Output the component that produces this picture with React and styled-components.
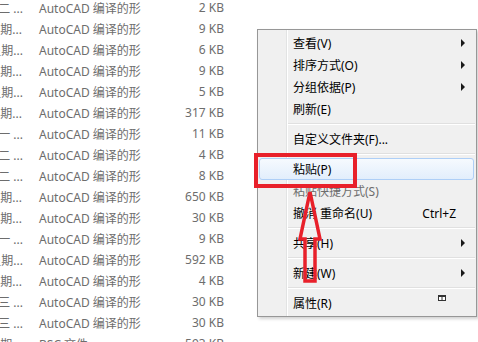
import React from "react";
import styled, { createGlobalStyle } from "styled-components";

const GlobalStyle = createGlobalStyle`
  html, body {
    margin: 0;
    padding: 0;
    background: #ffffff;
    overflow: hidden;
  }
  body {
    font-family: "Noto Sans", "Noto Sans CJK SC", sans-serif;
    font-size: 12px;
  }
`;

const Page = styled.div`
  position: relative;
  width: 478px;
  height: 342px;
  display: flex;
  align-items: flex-start;
  overflow: hidden;
`;

const FileList = styled.div`
  width: 257px;
  margin-top: -3px;
  display: flex;
  flex-direction: column;
  flex-shrink: 0;
`;

const FileRow = styled.div`
  height: 21px;
  display: flex;
  align-items: center;
  color: #6d6d6d;
  white-space: nowrap;
`;

const DateCell = styled.div`
  width: ${(p) => p.$w}px;
  overflow: hidden;
  display: flex;
  justify-content: flex-end;
  flex-shrink: 0;
`;

const TypeCell = styled.div`
  margin-left: ${(p) => 39 - p.$w}px;
  width: 125px;
  flex-shrink: 0;
`;

const SizeCell = styled.div`
  width: 60px;
  text-align: right;
  flex-shrink: 0;
`;

const Menu = styled.div`
  margin-top: 29px;
  width: 218px;
  flex-shrink: 0;
  border: 1px solid #979797;
  padding: 2px 0;
  background: linear-gradient(
    to right,
    #f0f0f0 28px,
    #e2e3e3 28px,
    #e2e3e3 29px,
    #ffffff 29px,
    #ffffff 30px,
    #f0f0f0 30px
  );
  box-shadow: 2px 2px 3px rgba(0, 0, 0, 0.18);
  color: #000000;
`;

const Item = styled.div`
  height: 22px;
  box-sizing: border-box;
  display: flex;
  align-items: center;
  margin: 0 2px 0 1px;
  padding-left: 33px;
  border: 1px solid transparent;
  border-radius: 3px;
  color: ${(p) => (p.$disabled ? "#6d6d6d" : "#000000")};
  white-space: nowrap;
  ${(p) =>
    p.$active &&
    `
    border-color: #aecff7;
    background: linear-gradient(to bottom, #f6fafe, #e2eefc);
  `}
`;

const Label = styled.span`
  flex: 1;
`;

const Shortcut = styled.span`
  margin-right: 17px;
`;

const Arrow = styled.span`
  width: 0;
  height: 0;
  border-top: 4px solid transparent;
  border-bottom: 4px solid transparent;
  border-left: 4px solid #1a1a1a;
  margin-right: 8px;
`;

const PropIcon = styled.svg`
  margin-right: 27px;
  margin-top: -10px;
`;

const Separator = styled.div`
  height: 8px;
  margin-left: 30px;
  margin-right: 1px;
  display: flex;
  flex-direction: column;
  justify-content: center;

  &::before {
    content: "";
    display: block;
    height: 1px;
    background: #e0e0e0;
  }
  &::after {
    content: "";
    display: block;
    height: 1px;
    background: #ffffff;
  }
`;

const HighlightBox = styled.div`
  position: absolute;
  left: 254px;
  top: 153px;
  width: 103px;
  height: 35px;
  box-sizing: border-box;
  border: 4px solid #e8202a;
  pointer-events: none;
`;

const Overlay = styled.svg`
  position: absolute;
  left: 0;
  top: 0;
  pointer-events: none;
`;

const files = [
  { d: "星期二 ...", t: "AutoCAD 编译的形", s: "2 KB", w: 23 },
  { d: "0/22 星期...", t: "AutoCAD 编译的形", s: "9 KB", w: 22 },
  { d: "0/2 星期...", t: "AutoCAD 编译的形", s: "6 KB", w: 23 },
  { d: "0/22 星期...", t: "AutoCAD 编译的形", s: "9 KB", w: 22 },
  { d: "0/2 星期...", t: "AutoCAD 编译的形", s: "5 KB", w: 23 },
  { d: "0/22 星期...", t: "AutoCAD 编译的形", s: "317 KB", w: 22 },
  { d: "星期一 ...", t: "AutoCAD 编译的形", s: "11 KB", w: 23 },
  { d: "星期二 ...", t: "AutoCAD 编译的形", s: "4 KB", w: 23 },
  { d: "星期二 ...", t: "AutoCAD 编译的形", s: "8 KB", w: 23 },
  { d: "0/22 星期...", t: "AutoCAD 编译的形", s: "650 KB", w: 22 },
  { d: "0/22 星期...", t: "AutoCAD 编译的形", s: "30 KB", w: 22 },
  { d: "星期一 ...", t: "AutoCAD 编译的形", s: "9 KB", w: 23 },
  { d: "0/2 星期...", t: "AutoCAD 编译的形", s: "592 KB", w: 23 },
  { d: "0/22 星期...", t: "AutoCAD 编译的形", s: "4 KB", w: 22 },
  { d: "星期三 ...", t: "AutoCAD 编译的形", s: "30 KB", w: 23 },
  { d: "星期三 ...", t: "AutoCAD 编译的形", s: "30 KB", w: 23 },
  { d: "0/22 星期...", t: "BSC 文件", s: "593 KB", w: 22 },
];

const App = () => {
  return (
    <>
      <GlobalStyle />
      <Page>
        <FileList>
          {files.map((f, i) => (
            <FileRow key={i}>
              <DateCell $w={f.w}>
                <span>{f.d}</span>
              </DateCell>
              <TypeCell $w={f.w}>{f.t}</TypeCell>
              <SizeCell>{f.s}</SizeCell>
            </FileRow>
          ))}
        </FileList>

        <Menu>
          <Item>
            <Label>查看(V)</Label>
            <Arrow />
          </Item>
          <Item>
            <Label>排序方式(O)</Label>
            <Arrow />
          </Item>
          <Item>
            <Label>分组依据(P)</Label>
            <Arrow />
          </Item>
          <Item>
            <Label>刷新(E)</Label>
          </Item>
          <Separator />
          <Item>
            <Label>自定义文件夹(F)...</Label>
          </Item>
          <Separator />
          <Item $active>
            <Label>粘贴(P)</Label>
          </Item>
          <Item $disabled>
            <Label>粘贴快捷方式(S)</Label>
          </Item>
          <Item>
            <Label>撤消 重命名(U)</Label>
            <Shortcut>Ctrl+Z</Shortcut>
          </Item>
          <Separator />
          <Item>
            <Label>共享(H)</Label>
            <Arrow />
          </Item>
          <Separator />
          <Item>
            <Label>新建(W)</Label>
            <Arrow />
          </Item>
          <Separator />
          <Item>
            <Label>属性(R)</Label>
            <PropIcon width="8" height="6" viewBox="0 0 8 6">
              <rect x="0.5" y="0.5" width="7" height="5" fill="#ffffff" stroke="#333333" />
              <rect x="0" y="0" width="8" height="2" fill="#333333" />
              <line x1="4" y1="2" x2="4" y2="6" stroke="#333333" />
            </PropIcon>
          </Item>
        </Menu>

        <HighlightBox />
        <Overlay width="478" height="342" viewBox="0 0 478 342">
          <path
            d="M310 192 L320 239 L315 239 L315 281 L305 281 L305 239 L300 239 Z"
            fill="none"
            stroke="#e8202a"
            strokeWidth="3.5"
            strokeLinejoin="miter"
          />
        </Overlay>
      </Page>
    </>
  );
};

export default App;
